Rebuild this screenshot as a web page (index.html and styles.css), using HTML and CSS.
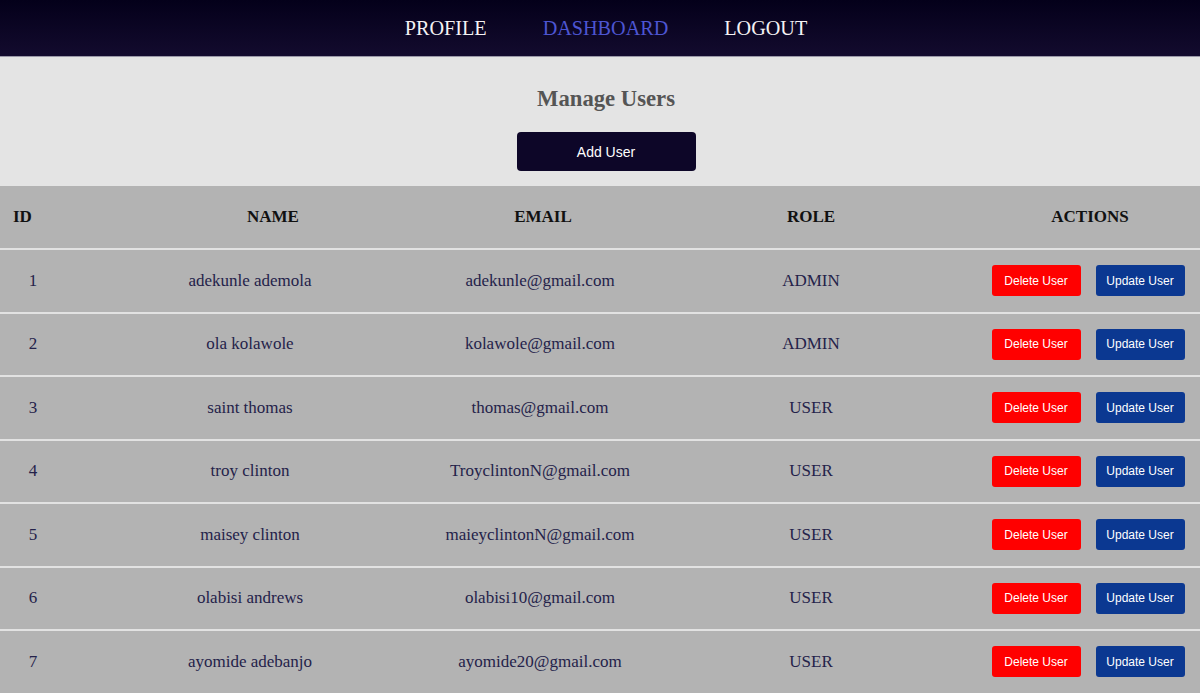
FILE: index.html
```html
<!DOCTYPE html>
<html>
<head>
<meta charset="utf-8">
<link rel="stylesheet" href="styles.css">
</head>
<body>
<nav class="nav">
  <a class="nav-link">PROFILE</a>
  <a class="nav-link active">DASHBOARD</a>
  <a class="nav-link">LOGOUT</a>
</nav>
<section class="band">
  <h2 class="title">Manage Users</h2>
  <button class="add-btn">Add User</button>
</section>
<table class="users">
  <colgroup>
    <col class="c-id"><col class="c-name"><col class="c-email"><col class="c-role"><col class="c-act">
  </colgroup>
  <thead>
    <tr><th class="th-id">ID</th><th class="th-name">NAME</th><th class="th-email">EMAIL</th><th>ROLE</th><th class="th-act">ACTIONS</th></tr>
  </thead>
  <tbody>
    <tr><td>1</td><td>adekunle ademola</td><td>adekunle@gmail.com</td><td>ADMIN</td><td><div class="acts"><button class="del">Delete User</button><button class="upd">Update User</button></div></td></tr>
    <tr><td>2</td><td>ola kolawole</td><td>kolawole@gmail.com</td><td>ADMIN</td><td><div class="acts"><button class="del">Delete User</button><button class="upd">Update User</button></div></td></tr>
    <tr><td>3</td><td>saint thomas</td><td>thomas@gmail.com</td><td>USER</td><td><div class="acts"><button class="del">Delete User</button><button class="upd">Update User</button></div></td></tr>
    <tr><td>4</td><td>troy clinton</td><td>TroyclintonN@gmail.com</td><td>USER</td><td><div class="acts"><button class="del">Delete User</button><button class="upd">Update User</button></div></td></tr>
    <tr><td>5</td><td>maisey clinton</td><td>maieyclintonN@gmail.com</td><td>USER</td><td><div class="acts"><button class="del">Delete User</button><button class="upd">Update User</button></div></td></tr>
    <tr><td>6</td><td>olabisi andrews</td><td>olabisi10@gmail.com</td><td>USER</td><td><div class="acts"><button class="del">Delete User</button><button class="upd">Update User</button></div></td></tr>
    <tr><td>7</td><td>ayomide adebanjo</td><td>ayomide20@gmail.com</td><td>USER</td><td><div class="acts"><button class="del">Delete User</button><button class="upd">Update User</button></div></td></tr>
  </tbody>
</table>
</body>
</html>
```
FILE: styles.css
```css
html, body {
  margin: 0;
  padding: 0;
  background: #b3b3b3;
  font-family: "Liberation Serif", "Times New Roman", serif;
}
.nav {
  height: 56px;
  display: flex;
  justify-content: center;
  align-items: center;
  gap: 56px;
  padding-left: 12px;
  background: linear-gradient(#04001a, #130b2e);
  border-bottom: 1px solid #9a98a8;
}
.nav-link {
  color: #f4f2f4;
  font-size: 20.2px;
  line-height: 24px;
  padding-bottom: 1px;
}
.nav-link.active {
  color: #4d55d2;
}
.band {
  background: #e4e4e4;
  padding: 29px 0 15px 12px;
  display: flex;
  flex-direction: column;
  align-items: center;
}
.title {
  margin: 0;
  font-size: 22.7px;
  line-height: 26px;
  font-weight: bold;
  color: #555555;
}
.add-btn {
  margin-top: 20px;
  width: 179px;
  height: 39px;
  border: none;
  border-radius: 4px;
  background: #0d0628;
  color: #ffffff;
  font-family: "Liberation Sans", Arial, sans-serif;
  font-size: 14px;
}
.users {
  width: 100%;
  border-spacing: 0;
  table-layout: fixed;
  color: #24224a;
}
.c-id { width: 66px; }
.c-name { width: 368px; }
.c-email { width: 212px; }
.c-role { width: 330px; }
.c-act { width: 224px; }
.users th {
  height: 64px;
  padding: 0;
  font-size: 17px;
  font-weight: bold;
  color: #111111;
  text-align: center;
  border-bottom: 2px solid #e2e2e2;
  box-sizing: border-box;
}
.users th.th-id {
  text-align: left;
  padding-left: 13px;
}
.users th.th-name {
  padding-left: 46px;
}
.users th.th-email {
  padding-left: 6px;
}
.users th.th-act {
  padding-left: 4px;
}
.users td {
  height: 61.5px;
  padding: 0;
  font-size: 17px;
  text-align: center;
  border-bottom: 2px solid #e2e2e2;
}
.acts {
  display: flex;
  justify-content: center;
  gap: 15px;
}
.del, .upd {
  width: 89px;
  height: 31px;
  border: none;
  border-radius: 3px;
  color: #ffffff;
  font-family: "Liberation Sans", Arial, sans-serif;
  font-size: 12px;
  padding: 0;
}
.del { background: #ff0000; }
.upd { background: #0b3891; }
```
